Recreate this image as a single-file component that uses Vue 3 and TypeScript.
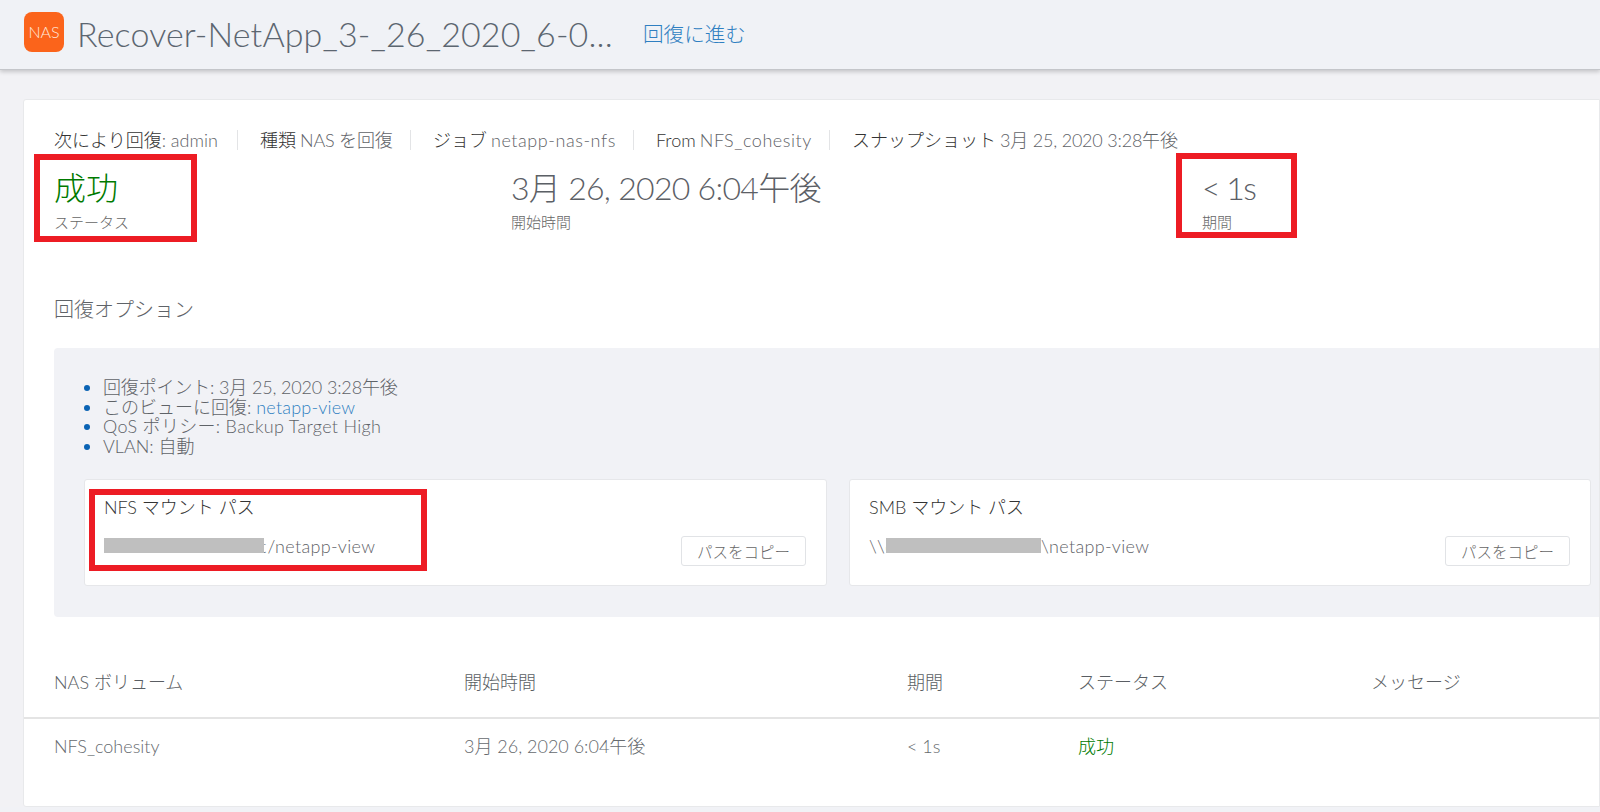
<template>
  <div class="page">
    <header class="topbar">
      <div class="logo">NAS</div>
      <h1 class="title">Recover-NetApp_3-_26_2020_6-0...</h1>
      <a class="go-link">回復に進む</a>
    </header>

    <main class="content">
      <section class="card">
        <ul class="meta">
          <li v-for="m in meta" :key="m.label" :style="{ width: m.width + 'px' }">
            <span class="meta-label">{{ m.label }}</span>
            <span class="meta-value">{{ m.value }}</span>
          </li>
        </ul>

        <div class="stats">
          <div class="stat">
            <div class="stat-value ok">成功</div>
            <div class="stat-label">ステータス</div>
            <i class="mark mark-status"></i>
          </div>
          <div class="stat">
            <div class="stat-value date">3月 26, 2020 6:04午後</div>
            <div class="stat-label">開始時間</div>
          </div>
          <div class="stat">
            <div class="stat-value short">&lt; 1s</div>
            <div class="stat-label">期間</div>
            <i class="mark mark-duration"></i>
          </div>
        </div>

        <h2 class="section-title">回復オプション</h2>

        <div class="panel">
          <ul class="options">
            <li class="tight">回復ポイント: 3月 25, 2020 3:28午後</li>
            <li>このビューに回復: <a class="link">netapp-view</a></li>
            <li class="wide">QoS ポリシー: Backup Target High</li>
            <li>VLAN: 自動</li>
          </ul>
          <div class="mounts">
            <div class="mount">
              <div class="mount-title">NFS マウント パス</div>
              <div class="mount-row">
                <div class="mount-path"><span class="redact r-nfs"></span><span class="tail">t</span>/netapp-view</div>
                <button class="copy">パスをコピー</button>
              </div>
              <i class="mark mark-nfs"></i>
            </div>
            <div class="mount smb">
              <div class="mount-title">SMB マウント パス</div>
              <div class="mount-row">
                <div class="mount-path"><span class="prefix">\\c</span><span class="redact r-smb"></span>\netapp-view</div>
                <button class="copy">パスをコピー</button>
              </div>
            </div>
          </div>
        </div>

        <div class="table">
          <div class="thead">
            <span>NAS ボリューム</span>
            <span>開始時間</span>
            <span>期間</span>
            <span>ステータス</span>
            <span>メッセージ</span>
          </div>
          <div class="trow">
            <span>NFS_cohesity</span>
            <span>3月 26, 2020 6:04午後</span>
            <span>&lt; 1s</span>
            <span class="ok">成功</span>
            <span></span>
          </div>
        </div>
      </section>
    </main>
  </div>
</template>

<script setup lang="ts">
interface MetaItem {
  label: string
  value: string
  width: number
}

const meta: MetaItem[] = [
  { label: '次により回復', value: ': admin', width: 206 },
  { label: '種類', value: 'NAS を回復', width: 173 },
  { label: 'ジョブ', value: 'netapp-nas-nfs', width: 223 },
  { label: 'From', value: 'NFS_cohesity', width: 196 },
  { label: 'スナップショット', value: '3月 25, 2020 3:28午後', width: 340 }
]
</script>

<style>
html,
body {
  margin: 0;
  background: #f1f2f6;
}
</style>

<style scoped>
.page {
  width: 1600px;
  height: 812px;
  overflow: hidden;
  background: #f1f2f6;
  color: #5f6368;
  font-family: Lato, "Noto Sans CJK JP", sans-serif;
  font-weight: 300;
}

.topbar {
  position: relative;
  display: flex;
  align-items: center;
  height: 70px;
  padding-left: 24px;
  box-sizing: border-box;
  background: #f0f2f6;
  border-bottom: 1px solid #c4c6ca;
  box-shadow: 0 2px 4px rgba(0, 0, 0, 0.18);
}

.logo {
  flex: none;
  width: 40px;
  height: 40px;
  margin-top: -5px;
  border-radius: 8px;
  background: #fb641b;
  color: #ffe9dc;
  font-size: 16px;
  line-height: 40px;
  text-align: center;
}

.title {
  margin: -2px 0 0 13px;
  width: 566px;
  color: #5c6670;
  font-size: 34px;
  font-weight: 300;
  letter-spacing: 0.14px;
  white-space: nowrap;
}

.go-link {
  margin-top: -4px;
  color: #2f7fc1;
  font-size: 20.6px;
}

.content {
  padding: 29px 0 0 23px;
  background: #f2f2f5;
}

.card {
  height: 708px;
  padding: 28px 0 0 30px;
  box-sizing: border-box;
  background: #fff;
  border: 1px solid #e8e9eb;
  border-radius: 3px 0 0 3px;
}

.meta {
  display: flex;
  margin: 0;
  padding: 0;
  list-style: none;
  font-size: 18px;
  line-height: 24px;
}

.meta li {
  flex: none;
  position: relative;
  box-sizing: border-box;
  white-space: nowrap;
}

.meta li:not(:last-child)::after {
  content: "";
  position: absolute;
  right: 22px;
  top: 2px;
  height: 20px;
  border-right: 1px solid #e3e4e6;
}

.meta-label {
  color: #333;
}

.meta li:not(:first-child) .meta-label {
  margin-right: 4px;
}

.meta-value {
  color: #5f6368;
}

.meta li:nth-child(2) .meta-value {
  letter-spacing: -0.2px;
}

.meta li:nth-child(3) .meta-value,
.meta li:nth-child(4) .meta-value {
  letter-spacing: 0.55px;
}

.meta li:nth-child(5) .meta-value {
  letter-spacing: -0.2px;
}

.stats {
  display: grid;
  grid-template-columns: 457px 691px 1fr;
  margin-top: 16px;
}

.stat {
  position: relative;
}

.stat-value {
  color: #5c6066;
  font-size: 32px;
  line-height: 40px;
  white-space: nowrap;
}

.stat-value.date {
  letter-spacing: -0.7px;
}

.stat-value.short {
  letter-spacing: -1.5px;
}

.stat-label {
  margin-top: 5px;
  color: #666;
  font-size: 15px;
  line-height: 18px;
}

.ok {
  color: #007a00 !important;
}

/* red annotation boxes laid over the screenshot */
.mark {
  position: absolute;
  box-sizing: border-box;
  border: 6px solid #ed1c24;
  pointer-events: none;
}

.mark-status {
  left: -20px;
  top: -14px;
  width: 163px;
  height: 88px;
}

.mark-duration {
  left: -26px;
  top: -15px;
  width: 121px;
  height: 85px;
}

.mark-nfs {
  left: 4px;
  top: 9px;
  width: 338px;
  height: 82px;
}

.section-title {
  margin: 64px 0 0;
  color: #5f6368;
  font-size: 20px;
  font-weight: 300;
  line-height: 28px;
}

.panel {
  height: 269px;
  margin-top: 25px;
  padding: 30px 10px 0 30px;
  box-sizing: border-box;
  background: #f1f2f6;
  border-radius: 4px 0 0 4px;
}

.options {
  margin: 0;
  padding: 0 0 0 19px;
  color: #5f6368;
  font-size: 18px;
  line-height: 19.7px;
}

.options li.tight {
  letter-spacing: -0.15px;
}

.options li.wide {
  letter-spacing: 0.3px;
}

.options li::marker {
  color: #0a63b4;
}

.link {
  color: #2f7fc1;
  letter-spacing: 0.2px;
}

.mounts {
  display: flex;
  gap: 22px;
  margin-top: 22px;
}

.mount {
  position: relative;
  flex: none;
  width: 743px;
  height: 107px;
  padding: 15px 20px 0 19px;
  box-sizing: border-box;
  background: #fff;
  border: 1px solid #e6e7ea;
  border-radius: 3px;
}

.mount.smb {
  width: 742px;
  padding-left: 19px;
}

.mount-title {
  color: #333;
  font-size: 18px;
  line-height: 24px;
}

.mount-row {
  display: flex;
  justify-content: space-between;
  align-items: flex-start;
  margin-top: 15px;
}

.mount-path {
  display: flex;
  align-items: center;
  color: #5f6368;
  font-size: 18px;
  letter-spacing: 0.3px;
  line-height: 24px;
}

.redact {
  position: relative;
  z-index: 1;
  height: 15px;
  background: #bfbfbf;
}

.r-nfs {
  width: 160px;
}

.r-smb {
  width: 155px;
}

.tail {
  margin-left: -4px;
  margin-right: 1px;
}

.prefix {
  width: 17px;
  white-space: nowrap;
}

.copy {
  width: 125px;
  height: 30px;
  margin-top: 2px;
  padding: 0;
  background: #fff;
  border: 1px solid #e1e3e6;
  border-radius: 3px;
  color: #666;
  font-family: inherit;
  font-size: 15.5px;
  font-weight: 300;
}

.table {
  margin: 45px 0 0 -30px;
}

.thead,
.trow {
  display: grid;
  grid-template-columns: 410px 443px 171px 293px 1fr;
  padding-left: 30px;
  font-size: 18px;
}

.thead {
  height: 55px;
  color: #5a5e63;
  line-height: 40px;
  border-bottom: 2px solid #e4e4e4;
}

.trow {
  padding-top: 15px;
  color: #666a6e;
  line-height: 24px;
}
</style>
